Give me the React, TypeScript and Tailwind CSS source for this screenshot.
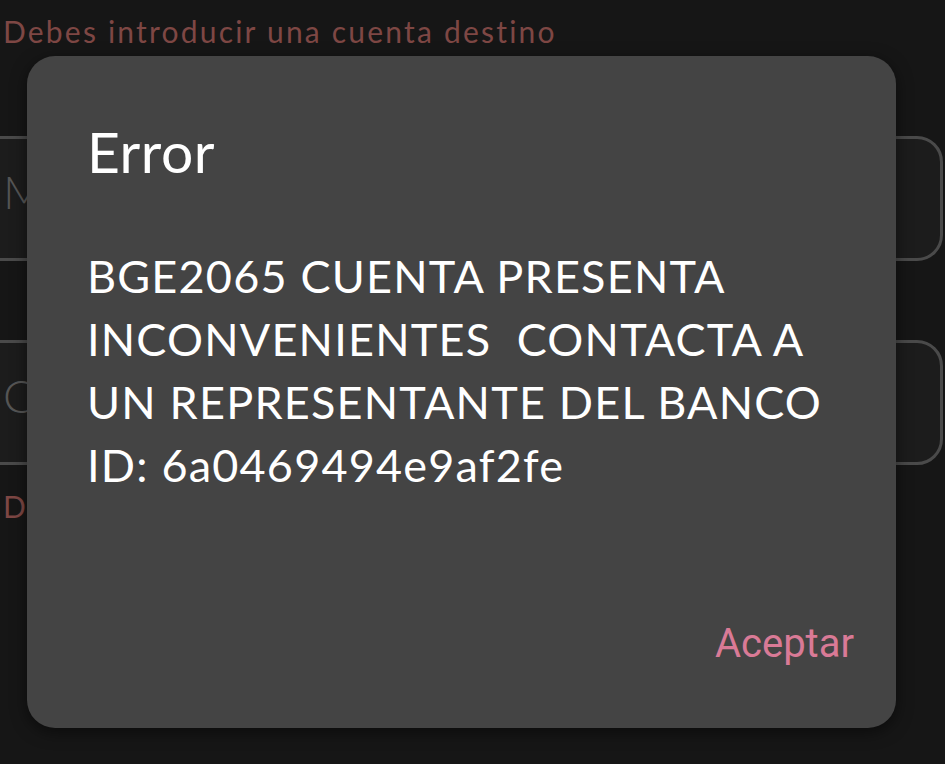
import React from "react";

const nun = { fontFamily: "Lato, 'Noto Sans', sans-serif" } as React.CSSProperties;

export default function App() {
  return (
    <div className="relative w-[945px] h-[764px] overflow-hidden bg-[#161616]" style={nun}>
      {/* background form */}
      <div className="flex flex-col">
        <div className="h-[56px] pl-[3px] pt-[12px] text-[30px] leading-[38px] tracking-[2.2px] text-[#7e4744] whitespace-nowrap">
          Debes introducir una cuenta destino
        </div>
        <div className="mt-[80px] -ml-[40px] w-[983px] h-[125px] rounded-[26px] border-[3px] border-[#4a4a4a] bg-[#1c1c1c] flex items-center">
          <span className="ml-[40px] -mt-[14px] text-[46px] font-light text-[#555]">M</span>
        </div>
        <div className="mt-[79px] -ml-[40px] w-[983px] h-[125px] rounded-[26px] border-[3px] border-[#4a4a4a] bg-[#1c1c1c] flex items-center">
          <span className="ml-[40px] -mt-[14px] text-[46px] font-light text-[#555]">C</span>
        </div>
        <div className="mt-[22px] pl-[3px] text-[30px] leading-[38px] text-[#7e4744]">D</div>
      </div>

      {/* dialog */}
      <div className="absolute left-[27px] top-[56px] w-[869px] h-[672px] rounded-[28px] bg-[#444444] shadow-[0_4px_16px_rgba(0,0,0,0.5)] flex flex-col">
        <div className="pl-[60px] pt-[58px] text-[57px] leading-[74px] tracking-[0.5px] text-white">Error</div>
        <div className="pl-[60px] pr-[20px] mt-[57px] text-[45px] leading-[63px] tracking-[1.2px] text-white whitespace-pre">
          {"BGE2065 CUENTA PRESENTA\nINCONVENIENTES  CONTACTA A\nUN REPRESENTANTE DEL BANCO\nID: 6a0469494e9af2fe"}
        </div>
        <div className="mt-auto mb-[60px] mr-[42px] self-end text-[40px] leading-[48px] text-[#d97a96]" style={{ fontFamily: "Roboto, sans-serif" }}>
          Aceptar
        </div>
      </div>
    </div>
  );
}
